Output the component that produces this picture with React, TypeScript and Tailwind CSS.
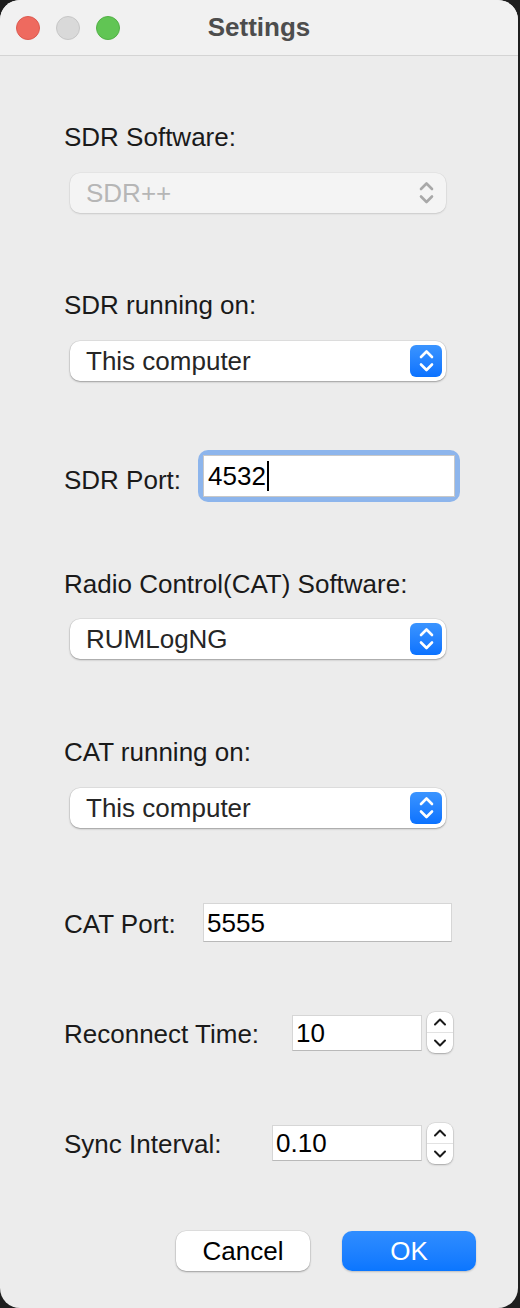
import React from "react";

const font = { fontFamily: '"Liberation Sans", Arial, sans-serif' };

const UpDown = ({ color }: { color: string }) => (
  <svg width="32" height="32" viewBox="0 0 32 32" fill="none">
    <path d="M11 12 L16.5 6.5 L22 12" stroke={color} strokeWidth="2.6" strokeLinecap="round" strokeLinejoin="round" />
    <path d="M11 19.5 L16.5 25 L22 19.5" stroke={color} strokeWidth="2.6" strokeLinecap="round" strokeLinejoin="round" />
  </svg>
);

const Select = ({ value, disabled }: { value: string; disabled?: boolean }) => (
  <div
    className={
      "ml-[6px] flex h-[40px] w-[376px] items-center justify-between rounded-[10px] pl-[16px] pr-[4px] text-[26px] " +
      (disabled
        ? "bg-[#f4f4f4] text-[#b6b6b6] shadow-[0_0_0_0.5px_rgba(0,0,0,0.06),0_1px_2px_rgba(0,0,0,0.12)]"
        : "bg-white text-[#262626] shadow-[0_0_0_0.5px_rgba(0,0,0,0.1),0_1px_2px_rgba(0,0,0,0.3)]")
    }
  >
    <span className="leading-[30px]">{value}</span>
    {disabled ? (
      <div className="flex h-[32px] w-[32px] items-center justify-center">
        <UpDown color="#a8a8a8" />
      </div>
    ) : (
      <div className="flex h-[32px] w-[32px] items-center justify-center rounded-[6px] bg-gradient-to-b from-[#3a94ff] to-[#0a72ff]">
        <UpDown color="#ffffff" />
      </div>
    )}
  </div>
);

const Stepper = () => (
  <div className="ml-[5px] flex h-[41px] w-[26px] flex-col rounded-[8px] bg-white shadow-[0_0_0_0.5px_rgba(0,0,0,0.12),0_1px_2px_rgba(0,0,0,0.25)]">
    <div className="flex flex-1 items-center justify-center border-b border-[#e2e2e2]">
      <svg width="14" height="8" viewBox="0 0 14 8" fill="none">
        <path d="M2 6.5 L7 1.5 L12 6.5" stroke="#1a1a1a" strokeWidth="2" strokeLinecap="round" strokeLinejoin="round" />
      </svg>
    </div>
    <div className="flex flex-1 items-center justify-center">
      <svg width="14" height="8" viewBox="0 0 14 8" fill="none">
        <path d="M2 1.5 L7 6.5 L12 1.5" stroke="#1a1a1a" strokeWidth="2" strokeLinecap="round" strokeLinejoin="round" />
      </svg>
    </div>
  </div>
);

const Field = ({ value, w, h }: { value: string; w: string; h: string }) => (
  <div
    className={
      "flex items-center border border-[#d6d6d6] border-b-[#b9b9b9] bg-white pl-[3px] text-[26px] leading-[30px] text-black " +
      w +
      " " +
      h
    }
  >
    {value}
  </div>
);

export default function App() {
  return (
    <div className="h-[1308px] w-[520px] bg-[#1e1e1e]" style={font}>
      <div className="flex h-[1308px] w-[518px] flex-col overflow-hidden rounded-[20px] bg-[#ececec]">
        {/* Title bar */}
        <div className="relative flex h-[56px] items-center justify-center border-b border-[#d4d4d4] bg-[#f1f1f1]">
          <div className="absolute left-[16px] top-[16px] flex gap-[16px]">
            <div className="h-[24px] w-[24px] rounded-full border border-[#dc5a50] bg-[#ee6a5f]" />
            <div className="h-[24px] w-[24px] rounded-full border border-[#c6c6c6] bg-[#d9d9d9]" />
            <div className="h-[24px] w-[24px] rounded-full border border-[#52b046] bg-[#61c554]" />
          </div>
          <span className="text-[26px] font-bold text-[#4d4d4d]">Settings</span>
        </div>

        {/* Form */}
        <div className="flex flex-col pl-[64px] text-[26px] leading-[30px] text-[#1a1a1a]">
          <div className="mt-[66px]">SDR Software:</div>
          <div className="mt-[21px]">
            <Select value="SDR++" disabled />
          </div>

          <div className="mt-[77px]">SDR running on:</div>
          <div className="mt-[21px]">
            <Select value="This computer" />
          </div>

          <div className="mt-[74px] flex items-start">
            <div className="mt-[10px] w-[139px]">SDR Port:</div>
            <div className="rounded-[5px] shadow-[0_0_0_5px_#8db5ec]">
              <div className="flex h-[42px] w-[252px] items-center border border-[#c8c8c8] bg-white pl-[4px] text-black">
                4532
                <span className="ml-[1px] inline-block h-[30px] w-[2px] bg-black" />
              </div>
            </div>
          </div>

          <div className="mt-[72px]">Radio Control(CAT) Software:</div>
          <div className="mt-[20px]">
            <Select value="RUMLogNG" />
          </div>

          <div className="mt-[78px]">CAT running on:</div>
          <div className="mt-[21px]">
            <Select value="This computer" />
          </div>

          <div className="mt-[75px] flex items-start">
            <div className="mt-[6px] w-[139px]">CAT Port:</div>
            <Field value="5555" w="w-[249px]" h="h-[39px]" />
          </div>

          <div className="mt-[70px] flex items-start">
            <div className="mt-[7px] w-[228px]">Reconnect Time:</div>
            <div className="mt-[3px]">
              <Field value="10" w="w-[130px]" h="h-[36px]" />
            </div>
            <Stepper />
          </div>

          <div className="mt-[70px] flex items-start">
            <div className="mt-[6px] w-[208px]">Sync Interval:</div>
            <div className="mt-[2px]">
              <Field value="0.10" w="w-[150px]" h="h-[36px]" />
            </div>
            <Stepper />
          </div>
        </div>

        {/* Buttons */}
        <div className="mt-[67px] flex justify-end gap-[32px] pr-[42px]">
          <button className="flex h-[40px] w-[134px] items-center justify-center rounded-[10px] bg-white text-[26px] text-black shadow-[0_0_0_0.5px_rgba(0,0,0,0.1),0_1px_2px_rgba(0,0,0,0.3)]">
            Cancel
          </button>
          <button className="flex h-[40px] w-[134px] items-center justify-center rounded-[10px] bg-gradient-to-b from-[#2f8dff] to-[#0a76ff] text-[26px] text-white shadow-[0_1px_2px_rgba(0,0,0,0.2)]">
            OK
          </button>
        </div>
      </div>
    </div>
  );
}
